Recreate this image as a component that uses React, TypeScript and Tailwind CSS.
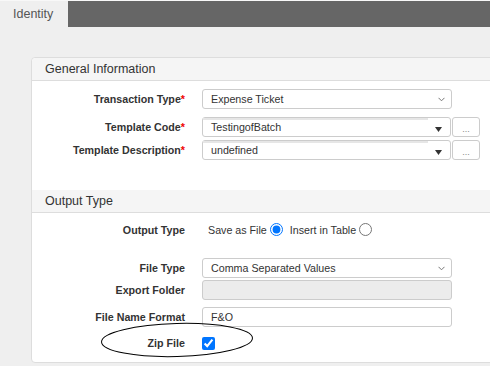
import React from 'react';

const font = { fontFamily: '"Liberation Sans", Arial, sans-serif' };

function Label({ text, required }: { text: string; required?: boolean }) {
    return (
        <div className="w-[153px] shrink-0 text-right text-[10.7px] font-bold text-[#333] leading-[20px]">
            {text}
            {required && <span className="text-[#e00]">*</span>}
        </div>
    );
}

function Select({ value }: { value: string }) {
    return (
        <div className="ml-[17px] flex h-[20px] w-[250px] items-center justify-between rounded-[3px] border border-[#ccc] bg-white pl-[8px] pr-[6px] text-[10.7px] text-[#333]">
            <span>{value}</span>
            <svg width="7" height="5" viewBox="0 0 7 5">
                <path d="M0.5 0.8 L3.5 3.8 L6.5 0.8" fill="none" stroke="#777" strokeWidth="1" />
            </svg>
        </div>
    );
}

function Combo({ value }: { value: string }) {
    return (
        <div className="ml-[17px] flex h-[20px]">
            <div className="relative flex w-[249px] items-center rounded-[3px] border border-[#ccc] bg-white pl-[8px] text-[10.7px] text-[#333]">
                <div className="absolute left-0 top-0 h-[2px] w-[225px] bg-[#e6e6e6]" />
                <span>{value}</span>
                <svg className="absolute right-[8px] bottom-[4px]" width="7" height="5" viewBox="0 0 7 5">
                    <path d="M0 0 L7 0 L3.5 5 Z" fill="#333" />
                </svg>
            </div>
            <div className="ml-[1px] flex w-[28px] items-end justify-center rounded-[3px] border border-[#ccc] bg-white pb-[2px] text-[9px] leading-[9px] text-[#888]">
                ...
            </div>
        </div>
    );
}

function Input({ value, disabled }: { value?: string; disabled?: boolean }) {
    return (
        <div
            className={`ml-[17px] flex h-[20px] w-[250px] items-center rounded-[3px] border border-[#ccc] pl-[8px] text-[10.7px] text-[#333] ${
                disabled ? 'bg-[#ececec]' : 'bg-white'
            }`}
        >
            {value}
        </div>
    );
}

export default function App() {
    return (
        <div className="min-h-[366px] w-[490px] overflow-hidden bg-[#efefef]" style={font}>
            {/* top tabs */}
            <div className="flex h-[27px] border-t border-[#f8f8f8]">
                <div className="flex w-[68px] items-center pl-[13px] text-[12.5px] text-[#555]">
                    Identity
                </div>
                <div className="flex-1 bg-[#666]" />
            </div>

            <div className="relative ml-[31px] mt-[30px] w-[470px] rounded-l-[4px] border border-[#ddd] bg-white">
                {/* General Information */}
                <div className="flex h-[23px] items-center rounded-tl-[4px] border-b border-[#ddd] bg-[#f5f5f5] pl-[13px] text-[12.5px] text-[#333]">
                    General Information
                </div>
                <div className="pt-[8px] pb-[30px]">
                    <div className="flex">
                        <Label text="Transaction Type" required />
                        <Select value="Expense Ticket" />
                    </div>
                    <div className="mt-[8px] flex">
                        <Label text="Template Code" required />
                        <Combo value="TestingofBatch" />
                    </div>
                    <div className="mt-[3px] flex">
                        <Label text="Template Description" required />
                        <Combo value="undefined" />
                    </div>
                </div>

                {/* Output Type */}
                <div className="flex h-[23px] items-center border-b border-[#ddd] bg-[#f5f5f5] pl-[13px] text-[12.5px] text-[#333]">
                    Output Type
                </div>
                <div className="pt-[7px] pb-[9px]">
                    <div className="flex items-center">
                        <Label text="Output Type" />
                        <div className="ml-[23px] flex items-center text-[10.7px] text-[#333]">
                            <span>Save as File</span>
                            <input type="radio" checked readOnly className="ml-[3px] mr-[7px] my-0 h-[13px] w-[13px]" />
                            <span>Insert in Table</span>
                            <input type="radio" readOnly className="ml-[3px] my-0 h-[13px] w-[13px]" />
                        </div>
                    </div>
                    <div className="mt-[18px] flex">
                        <Label text="File Type" />
                        <Select value="Comma Separated Values" />
                    </div>
                    <div className="mt-[2px] flex">
                        <Label text="Export Folder" />
                        <Input disabled />
                    </div>
                    <div className="mt-[7px] flex">
                        <Label text="File Name Format" />
                        <Input value="F&O" />
                    </div>
                    <div className="mt-[6px] flex items-center">
                        <Label text="Zip File" />
                        <input type="checkbox" checked readOnly className="ml-[17px] my-0 h-[13px] w-[13px]" />
                    </div>
                </div>

                {/* hand-drawn annotation */}
                <svg className="pointer-events-none absolute left-[67px] top-[263px]" width="156" height="40" viewBox="0 0 156 40">
                    <ellipse cx="78" cy="19" rx="75.5" ry="16.5" fill="none" stroke="#000" strokeWidth="1" transform="rotate(-1.5 78 19)" />
                </svg>
            </div>
        </div>
    );
}
